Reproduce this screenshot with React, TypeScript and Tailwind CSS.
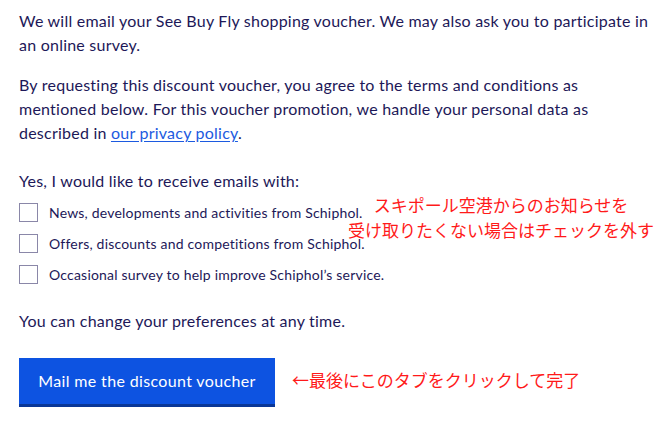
export default function App() {
    const options = [
        "News, developments and activities from Schiphol.",
        "Offers, discounts and competitions from Schiphol.",
        "Occasional survey to help improve Schiphol’s service.",
    ];

    return (
        <div className="relative w-[664px] h-[421px] bg-white overflow-hidden font-['Lato','Liberation_Sans',sans-serif] text-[#1d1858] tracking-[0.23px]">
            <div className="pl-[19px] pt-[9px]">
                {/* Intro */}
                <p className="text-[16px] leading-[24px]">
                    We will email your See Buy Fly shopping voucher. We may also ask you to participate in
                    <br />
                    an online survey.
                </p>
                <p className="mt-4 text-[16px] leading-[24px]">
                    By requesting this discount voucher, you agree to the terms and conditions as
                    <br />
                    mentioned below. For this voucher promotion, we handle your personal data as
                    <br />
                    described in{" "}
                    <a className="text-[#1c5ae0] underline underline-offset-2" href="#">
                        our privacy policy
                    </a>
                    .
                </p>

                {/* Email preferences */}
                <p className="mt-6 text-[16px] leading-[24px]">Yes, I would like to receive emails with:</p>
                <div className="mt-[10px] flex flex-col gap-3">
                    {options.map((label) => (
                        <label key={label} className="flex items-center gap-[11px] h-[19px]">
                            <span className="w-[19px] h-[19px] border border-[#8a87a8] bg-white shrink-0" />
                            <span className="text-[14px] leading-[19px] tracking-[0.2px]">{label}</span>
                        </label>
                    ))}
                </div>

                <p className="mt-[25px] text-[16px] leading-[24px]">You can change your preferences at any time.</p>

                <button className="mt-[25px] w-[256px] pt-[11px] pb-[11px] bg-[#0d53e1] border-b-[3px] border-[#0a3797] text-white text-[16px] leading-[24px] tracking-[0.35px] text-center">
                    Mail me the discount voucher
                </button>
            </div>

            {/* Annotations */}
            <div className="absolute left-[346px] top-[192px] w-[310px] text-center text-[17px] leading-[25px] tracking-normal text-[#ff1a1a] font-['Noto_Sans_CJK_JP',sans-serif]">
                スキポール空港からのお知らせを
                <br />
                受け取りたくない場合はチェックを外す
            </div>
            <div className="absolute left-[292px] top-[367px] text-[17px] leading-[25px] tracking-normal text-[#ff1a1a] whitespace-nowrap font-['Noto_Sans_CJK_JP',sans-serif]">
                ←最後にこのタブをクリックして完了
            </div>
        </div>
    );
}
